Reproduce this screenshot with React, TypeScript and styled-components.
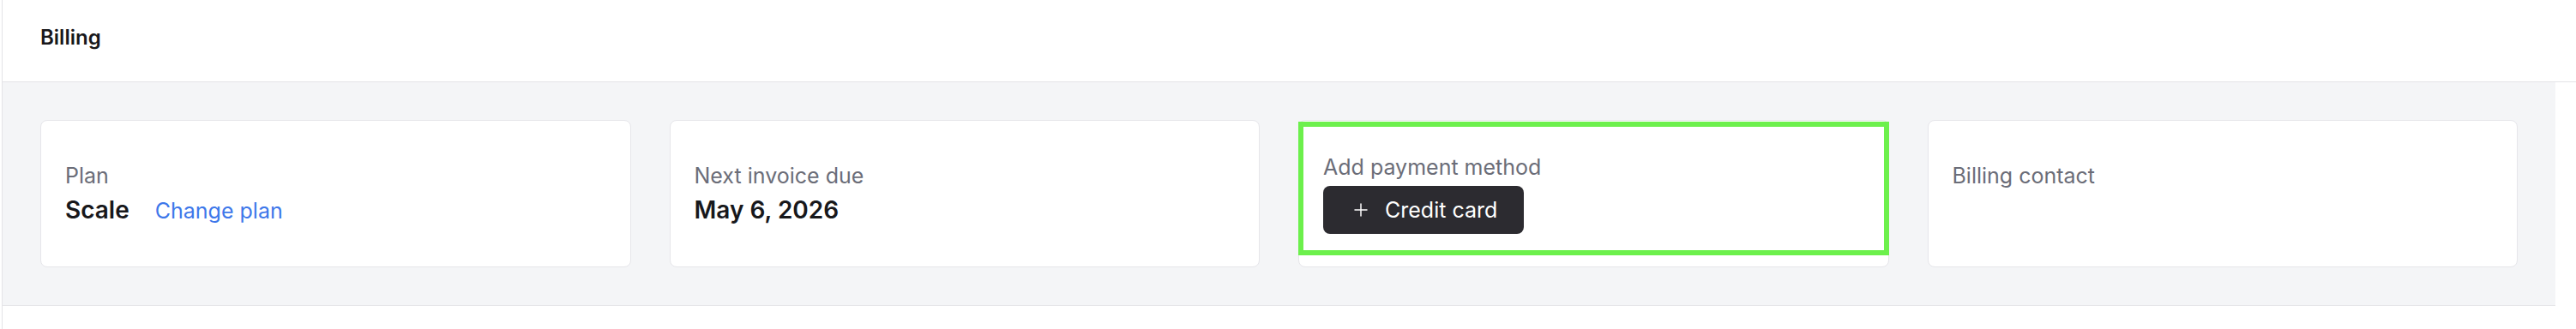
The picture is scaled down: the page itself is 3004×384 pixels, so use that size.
import React from "react";
import styled, { createGlobalStyle } from "styled-components";
import { Plus } from "lucide-react";

const GlobalStyle = createGlobalStyle`
  html, body {
    margin: 0;
    padding: 0;
    background: #ffffff;
  }
  body {
    font-family: Inter, "Noto Sans", "Liberation Sans", sans-serif;
    -webkit-font-smoothing: antialiased;
  }
  * { box-sizing: border-box; }
`;

const Page = styled.div`
  margin-left: 2px;
  min-height: 100vh;
  border-left: 1px solid #e4e4e7;
  display: flex;
  flex-direction: column;
`;

const Header = styled.header`
  height: 96px;
  padding: 32px 44px 0;
  border-bottom: 1px solid #e4e4e7;
`;

const Title = styled.h1`
  margin: 0;
  font-size: 24px;
  line-height: 24px;
  font-weight: 600;
  color: #18181b;
`;

const Section = styled.section`
  margin-right: 24px;
  padding: 44px 44px 44px;
  background: #f4f5f7;
  border-bottom: 1px solid #e4e4e7;
  display: grid;
  grid-template-columns: repeat(4, 1fr);
  gap: 45px;
`;

const Card = styled.div`
  position: relative;
  height: 172px;
  padding: 0 28px;
  background: #ffffff;
  border: 1px solid #e6e6ea;
  border-radius: 8px;
  display: flex;
  flex-direction: column;
  justify-content: center;
  gap: 6px;
`;

const Label = styled.div`
  font-size: 25px;
  line-height: 32px;
  font-weight: 400;
  color: #6b6d78;
`;

const ValueRow = styled.div`
  min-height: 36px;
  display: flex;
  align-items: baseline;
  gap: 30px;
`;

const Value = styled.span`
  font-size: 28px;
  line-height: 36px;
  font-weight: 600;
  color: #18181b;
`;

const Link = styled.a`
  font-size: 25px;
  line-height: 36px;
  color: #3e78ea;
  text-decoration: none;
  cursor: pointer;
`;

const Button = styled.button`
  align-self: flex-start;
  height: 56px;
  padding: 0 31px 0 32px;
  border: none;
  border-radius: 8px;
  background: #2c2b30;
  color: #ffffff;
  display: inline-flex;
  align-items: center;
  gap: 16px;
  font-family: inherit;
  font-size: 25px;
  font-weight: 400;
  line-height: 1;
  cursor: pointer;
`;

const Highlight = styled.div`
  position: absolute;
  top: 1px;
  left: -1px;
  right: -1px;
  bottom: 13px;
  border: 6px solid #6cf04c;
  pointer-events: none;
`;

export default function App() {
  return (
    <>
      <GlobalStyle />
      <Page>
        <Header>
          <Title>Billing</Title>
        </Header>
        <Section>
          <Card>
            <Label>Plan</Label>
            <ValueRow>
              <Value>Scale</Value>
              <Link>Change plan</Link>
            </ValueRow>
          </Card>
          <Card>
            <Label>Next invoice due</Label>
            <ValueRow>
              <Value>May 6, 2026</Value>
            </ValueRow>
          </Card>
          <Card>
            <Label>Add payment method</Label>
            <Button>
              <Plus size={24} strokeWidth={1.5} />
              Credit card
            </Button>
            <Highlight />
          </Card>
          <Card>
            <Label>Billing contact</Label>
            <ValueRow />
          </Card>
        </Section>
      </Page>
    </>
  );
}
